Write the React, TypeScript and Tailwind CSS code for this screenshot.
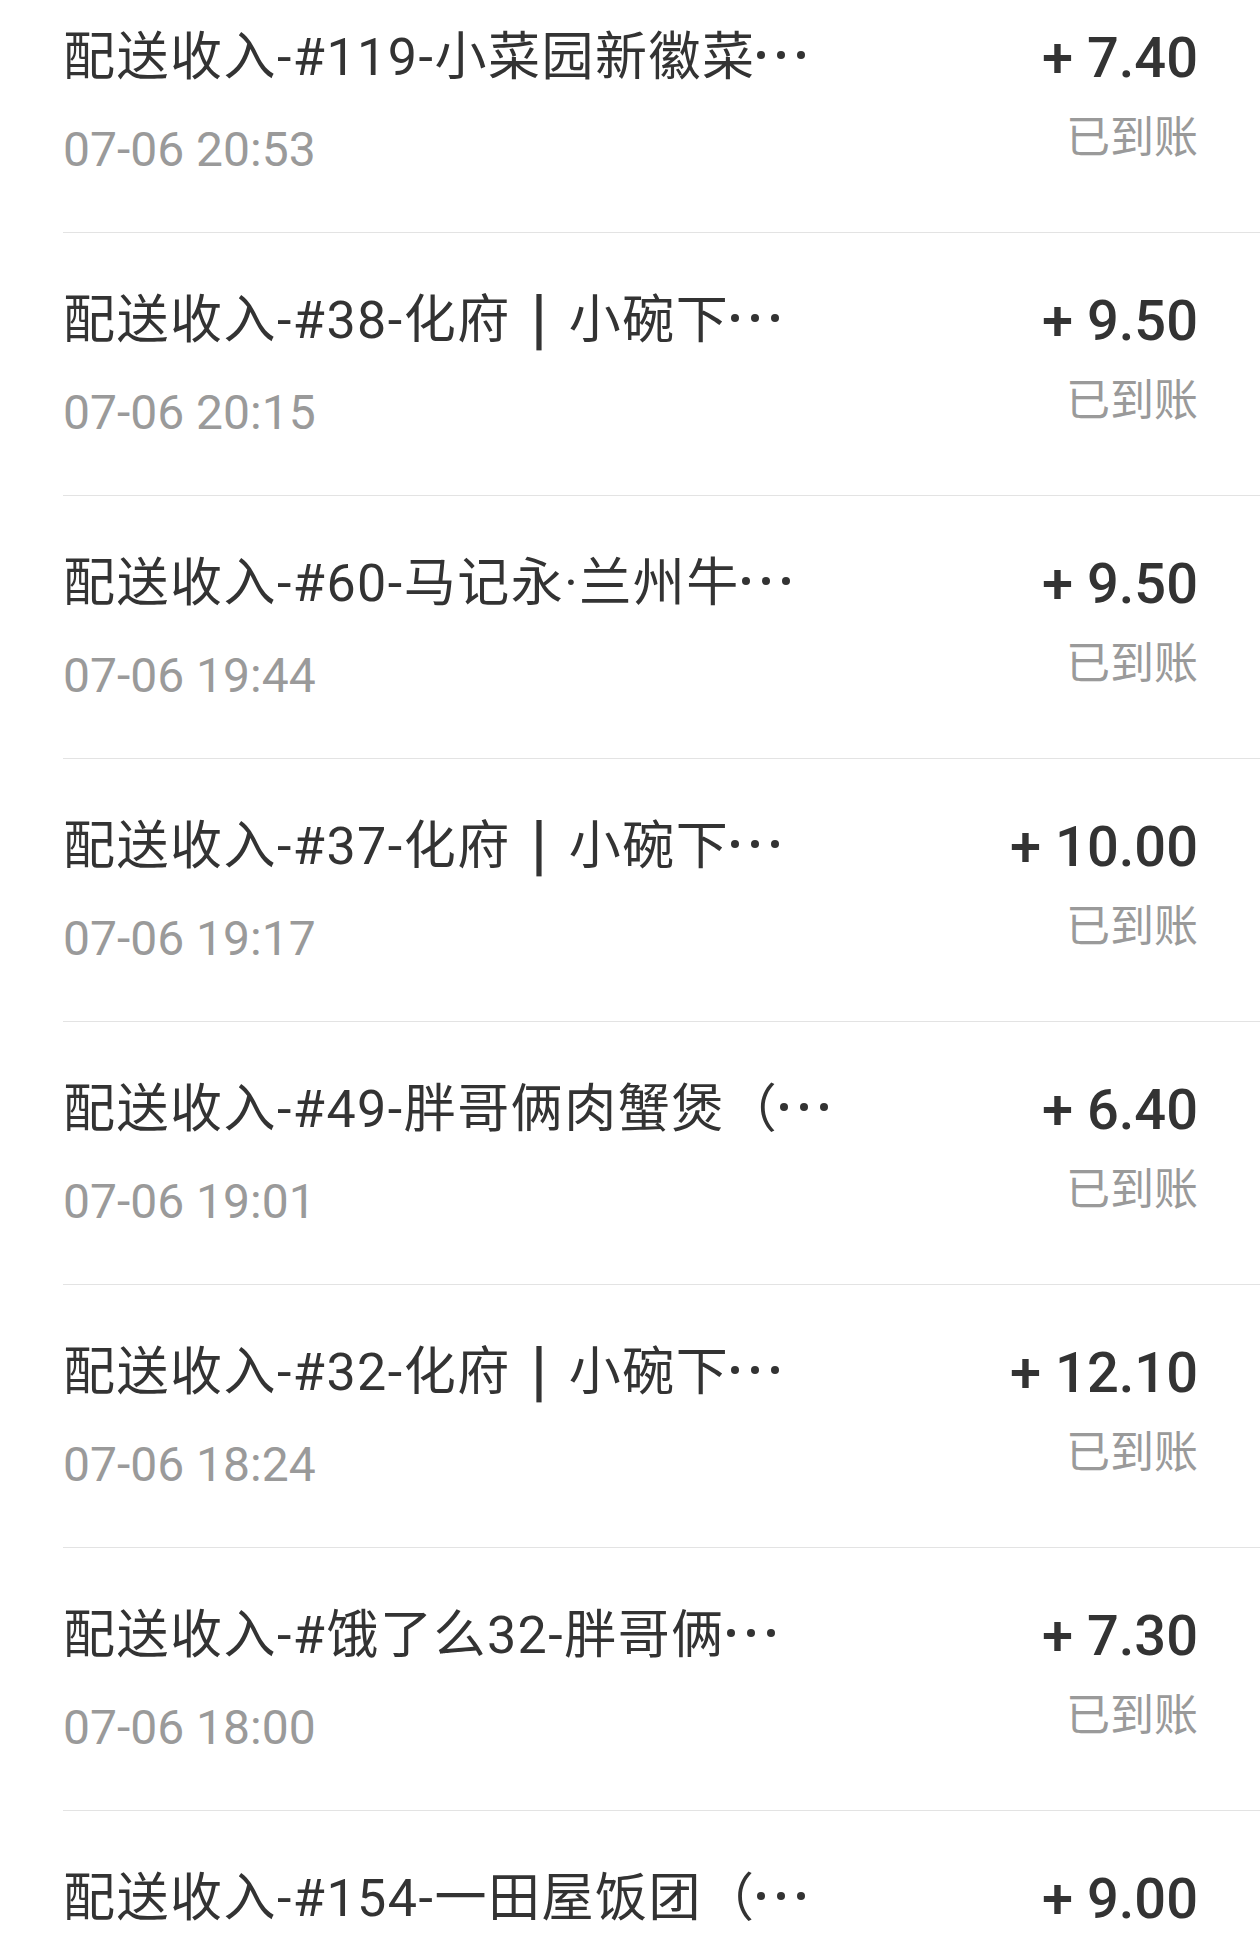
import React from "react";

type Item = { title: string; time: string; amount: string };

const items: Item[] = [
  { title: "配送收入-#119-小菜园新徽菜", time: "07-06 20:53", amount: "+ 7.40" },
  { title: "配送收入-#38-化府｜小碗下", time: "07-06 20:15", amount: "+ 9.50" },
  { title: "配送收入-#60-马记永·兰州牛", time: "07-06 19:44", amount: "+ 9.50" },
  { title: "配送收入-#37-化府｜小碗下", time: "07-06 19:17", amount: "+ 10.00" },
  { title: "配送收入-#49-胖哥俩肉蟹煲（", time: "07-06 19:01", amount: "+ 6.40" },
  { title: "配送收入-#32-化府｜小碗下", time: "07-06 18:24", amount: "+ 12.10" },
  { title: "配送收入-#饿了么32-胖哥俩", time: "07-06 18:00", amount: "+ 7.30" },
  { title: "配送收入-#154-一田屋饭团（", time: "07-06 17:42", amount: "+ 9.00" },
];

const font = { fontFamily: 'Roboto, "Noto Sans CJK SC", sans-serif' };

function Ellipsis() {
  return (
    <span className="inline-flex items-center gap-[12px] ml-[2px] align-middle relative top-[-6px]">
      <span className="block w-[8px] h-[8px] rounded-full bg-[#333333]" />
      <span className="block w-[8px] h-[8px] rounded-full bg-[#333333]" />
      <span className="block w-[8px] h-[8px] rounded-full bg-[#333333]" />
    </span>
  );
}

function Title({ text }: { text: string }) {
  const parts = text.split("｜");
  return (
    <>
      {parts.map((p, i) => (
        <React.Fragment key={i}>
          {i > 0 && (
            <span className="inline-block mx-[20px] font-medium text-[66px] leading-[52px] relative top-[4px]">
              |
            </span>
          )}
          {p}
        </React.Fragment>
      ))}
    </>
  );
}

export default function App() {
  return (
    <div className="w-[1260px] h-[1936px] overflow-hidden bg-white" style={font}>
      <div className="mt-[-30px] pl-[63px]">
        {items.map((it, i) => (
          <div
            key={i}
            className="h-[263px] border-b border-[#e3e3e3] flex justify-between items-start pr-[62px]"
          >
            <div className="pt-[52px] flex flex-col">
              <div className="h-[72px] text-[52px] leading-[72px] text-[#333333] tracking-[1.5px] whitespace-nowrap">
                <Title text={it.title} />
                <Ellipsis />
              </div>
              {i < items.length - 1 && (
                <div className="mt-[26px] text-[48px] leading-[60px] text-[#9a9a9a] whitespace-nowrap">
                  {it.time}
                </div>
              )}
            </div>
            <div className="pt-[52px] flex flex-col items-end">
              <div className="text-[56px] leading-[72px] font-medium text-[#333333] whitespace-nowrap">
                {it.amount}
              </div>
              {i < items.length - 1 && (
                <div className="mt-[14px] text-[44px] leading-[60px] text-[#9a9a9a] whitespace-nowrap">
                  已到账
                </div>
              )}
            </div>
          </div>
        ))}
      </div>
    </div>
  );
}
